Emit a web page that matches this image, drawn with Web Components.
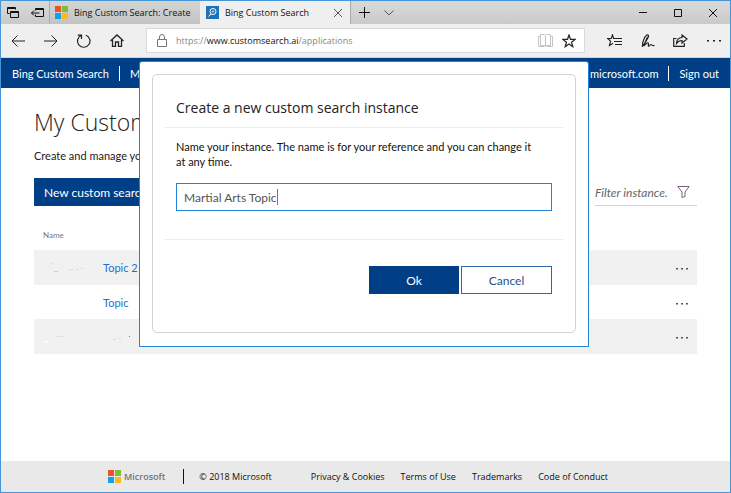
<!DOCTYPE html>
<html lang="en">
<head>
<meta charset="utf-8">
<title>Bing Custom Search</title>
<style>
html, body { margin: 0; height: 100%; }
body { font: 11px/15px Lato, "Open Sans", sans-serif; color: #222; background: #fff; }
</style>
</head>
<body>
<browser-window>
  <browser-tabs slot="chrome"></browser-tabs>
  <browser-toolbar slot="chrome"></browser-toolbar>
  <site-nav></site-nav>
  <instance-page></instance-page>
  <site-footer></site-footer>
  <create-dialog slot="overlay"></create-dialog>
</browser-window>
<script>
const base = `
  *, *::before { box-sizing: border-box; }
  button { font: inherit; color: inherit; background: none; border: 0; padding: 0; margin: 0; }
  input { font: inherit; margin: 0; outline: 0; border-radius: 0; min-width: 0; }
  a { text-decoration: none; color: inherit; }
  svg { display: block; fill: none; stroke: currentColor; }
`;
const logo = `<svg width="13" height="13" viewBox="0 0 13 13" stroke="none" style="stroke:none" aria-hidden="true">
  <path fill="#e8532b" d="M0 0h6v6H0z"/><path fill="#80bb35" d="M7 0h6v6H7z"/>
  <path fill="#13a1e8" d="M0 7h6v6H0z"/><path fill="#fdb71f" d="M7 7h6v6H7z"/></svg>`;
const more = `<button aria-label="Actions"><svg width="12" height="3" viewBox="0 0 12 3"><path fill="#555" stroke="none" d="M0 1h2v1.500H0zM5 1h2v1.500H5zM10 1h2v1.500h-2z"/></svg></button>`;

function define(name, css, html) {
  customElements.define(name, class extends HTMLElement {
    constructor() {
      super();
      this.attachShadow({ mode: 'open' }).innerHTML = `<style>${base}${css}</style>${html}`;
    }
  });
}

define('browser-window', `
  :host { display: flex; flex-direction: column; position: relative; box-sizing: border-box;
    min-height: 100vh; border: 1px solid #4795d6; background: #fff; }
  main { flex: 1; display: flex; flex-direction: column; }
`, `<slot name="chrome"></slot><main><slot></slot></main><slot name="overlay"></slot>`);

define('browser-tabs', `
  :host { display: flex; height: 23px; background: linear-gradient(#d9dad8, #c8caca);
    font: 9px/22px "Open Sans", sans-serif; color: #111; }
  button { display: grid; place-items: center; width: 24px; flex: none; }
  .tab { display: flex; align-items: center; gap: 6px; width: 150px; padding: 0 5px; white-space: nowrap;
    border-left: 1px solid #aaa; background: linear-gradient(#d4d5d3, #c2c4c4); }
  .tab span { flex: 1; }
  .first { width: 151px; }
  .active { background: #efefef; border-left: 0; padding: 0 0 0 6px; }
  .add { width: 27px; border-left: 1px solid #aaa; }
  .win { width: 35px; }
  .gap { flex: 1; }
`, `
  <button aria-label="Tabs set aside"><svg width="12" height="12" viewBox="0 0 12 12"><path d="M2.500 6.500h-2v-6h8v2M0 1.500h9M3.500 4.500h8v6h-8zM3 5.500h9"/></svg></button>
  <button aria-label="Set these tabs aside"><svg width="13" height="12" viewBox="0 0 13 12"><path d="M4.500 3.500v-2h8v8h-8v-2M4 2.500h9M.5 6h8M3 3.500L.5 6 3 8.500"/></svg></button>
  <div class="tab first">${logo}<span>Bing Custom Search: Create</span></div>
  <div class="tab active"><svg width="13" height="13" viewBox="0 0 13 13"><path fill="#1d72b8" stroke="none" d="M0 0h13v13H0z"/><g stroke="#fff"><circle cx="7" cy="5.500" r="3"/><circle cx="7" cy="5.500" r=".6"/><path d="M5 8l-2.500 2.500"/></g></svg><span>Bing Custom Search</span>
    <button aria-label="Close tab"><svg width="8" height="8" viewBox="0 0 8 8"><path stroke="#555" d="M0 0l8 8M8 0L0 8"/></svg></button></div>
  <button class="add" aria-label="New tab"><svg width="11" height="11" viewBox="0 0 11 11"><path d="M5.500 0v11M0 5.500h11"/></svg></button>
  <button aria-label="Tab previews"><svg width="10" height="6" viewBox="0 0 10 6"><path stroke="#555" d="M.5.5L5 5 9.500.5"/></svg></button>
  <div class="gap"></div>
  <button class="win" aria-label="Minimize"><svg width="8" height="8" viewBox="0 0 8 8"><path d="M0 3.500h8"/></svg></button>
  <button class="win" aria-label="Maximize"><svg width="8" height="8" viewBox="0 0 8 8"><path d="M.5.5h7v7h-7z"/></svg></button>
  <button class="win" aria-label="Close"><svg width="8" height="8" viewBox="0 0 8 8"><path d="M0 0l8 8M8 0L0 8"/></svg></button>`);

define('browser-toolbar', `
  :host { display: flex; align-items: center; height: 34px; box-sizing: border-box; background: #efefef;
    border-bottom: 1px solid #d4d4d4; color: #222; }
  button { display: grid; place-items: center; width: 33px; height: 25px; flex: none; }
  .address { flex: 1; display: flex; align-items: center; height: 25px; margin: 0 13px; padding-left: 10px;
    background: #fff; border: 1px solid #dadada; }
  .address svg { flex: none; }
  .address button { width: 24px; }
  .address button:last-child { margin-right: 3px; }
  .url { flex: 1; margin-left: 9px; font: 9px/22px "Open Sans", sans-serif; color: #888; }
  .url b { font-weight: 400; color: #111; }
`, `
  <button aria-label="Back"><svg width="14" height="12" viewBox="0 0 14 12"><path d="M14 6H1M6.500.5L1 6l5.500 5.500"/></svg></button>
  <button aria-label="Forward"><svg width="14" height="12" viewBox="0 0 14 12"><path d="M0 6h13M7.500.5L13 6l-5.500 5.500"/></svg></button>
  <button aria-label="Refresh"><svg width="14" height="14" viewBox="0 0 14 14"><path stroke-width="1.200" d="M8.800 1.200A6.200 6.200 0 1 1 4 1.500M.8 1.200h3.700v3.700"/></svg></button>
  <button aria-label="Home"><svg width="14" height="13" viewBox="0 0 14 13"><path stroke-width="1.300" d="M.5 7L7 1l6.500 6M2.500 6v6.300h3V8h3v4.300h3V6"/></svg></button>
  <div class="address">
    <svg width="10" height="13" viewBox="0 0 10 13"><path stroke="#777" d="M.5 5.500h9v7h-9zM2.500 5.500V3a2.500 2.500 0 0 1 5 0v2.500"/></svg>
    <a class="url" href="#">https://<b>www.customsearch.ai</b>/applications</a>
    <button aria-label="Reading view"><svg width="15" height="13" viewBox="0 0 15 13"><path stroke="#c4c4c4" d="M2.500.5h4l1 1 1-1h4v11h-4l-1 1-1-1h-4zM7.500 1v11M2.500 2.500h-2v10h6M12.500 2.500h2v10h-6"/></svg></button>
    <button aria-label="Add to favorites"><svg width="14" height="14" viewBox="0 0 14 14"><path stroke-width="1.200" d="M7 1l1.500 4.300 4.700.1-3.700 2.800 1.300 4.500L7 10.100l-3.800 2.600 1.300-4.500L.8 5.400l4.700-.1z"/></svg></button>
  </div>
  <button aria-label="Hub"><svg width="15" height="13" viewBox="0 0 15 13"><path stroke-width="1.100" d="M8.800 4.500L6.500 4.500 5.500.8 4.300 4.500.6 4.600l3 2.500-1.200 4.500L6 9.200M8 4.500h7M7 7.500h8M8 10.500h7"/></svg></button>
  <button aria-label="Add notes"><svg width="14" height="14" viewBox="0 0 14 14"><path stroke-width="1.200" d="M1.500 12.800C1 10 3 3 5.500 1.300 7 .3 8 1.500 7.200 3.300 6 6 4 9 1.500 12.500M3.800 9L6.500 3M3 12c2-2.500 3.500-3.800 4.200-3 .8.900-.5 2.900.3 3.200.9.300 1.500-1.700 2.500-1.700.8 0 1 1.500 3.500 1"/></svg></button>
  <button aria-label="Share"><svg width="15" height="13" viewBox="0 0 15 13"><path stroke-width="1.200" d="M3.500 4.500H.7v7.800h10.600V9M9 1l5 4-5 4V6.500C6.500 6.500 5 7.200 3.500 9.500 3.700 5.500 6 3.600 9 3.500z"/></svg></button>
  <button aria-label="Settings and more"><svg width="14" height="2" viewBox="0 0 14 2"><path fill="#222" stroke="none" d="M0 0h2v1.500H0zM6 0h2v1.500H6zM12 0h2v1.500h-2z"/></svg></button>`);

define('site-nav', `
  :host { display: block; background: #003f85; color: #fff; }
  nav { display: flex; align-items: center; height: 30px; padding: 0 11px; }
  a { white-space: nowrap; }
  i { width: 1px; height: 15px; background: #fff; margin: 0 10px; }
  .gap { flex: 1; }
`, `<nav><a href="#">Bing Custom Search</a><i></i><a href="#">My</a><span class="gap"></span>
  <a href="#">microsoft.com</a><i></i><a href="#">Sign out</a></nav>`);

define('instance-page', `
  :host { display: block; flex: 1; padding: 17px 33px; }
  h1 { font: 300 23px/34px "Open Sans", sans-serif; color: #222; margin: 0; }
  p { margin: 9px 0 15px; }
  .bar { display: flex; justify-content: space-between; align-items: flex-end; height: 28px; }
  .new { background: #003f85; color: #fff; height: 28px; width: 160px; padding: 0 10px; font-size: 12px; text-align: left; }
  label { display: flex; align-items: center; gap: 6px; height: 27px; padding-right: 7px; border-bottom: 1px solid #d4d4d4; }
  label input { width: 76px; border: 0; padding: 0; font-style: italic; font-size: 12px; color: #666; background: none; }
  label svg { color: #77607a; }
  table { width: 100%; border-collapse: collapse; margin-top: 17px; }
  th { text-align: left; font-weight: 400; font-size: 8px; line-height: 25px; color: #777; padding: 0 0 2px 9px; }
  td { height: 34px; padding: 0 9px; }
  tbody tr:nth-child(odd) { background: #f1f1f1; }
  tbody tr:nth-child(odd) td { height: 35px; }
  .name { display: flex; align-items: center; }
  .name a { color: #1a6fd0; }
  td:last-child { width: 40px; }
  td button { display: block; margin-left: auto; padding: 8px 0 6px; }
`, `
  <h1>My Custom</h1>
  <p>Create and manage your</p>
  <div class="bar">
    <button class="new">New custom search</button>
    <label><input aria-label="Filter instance" value="Filter instance."><svg width="13" height="12" viewBox="0 0 13 12"><path d="M.8.5h11.400L8 6v4.500L5 11.500V6z"/></svg></label>
  </div>
  <table>
    <thead><tr><th>Name</th><th></th></tr></thead>
    <tbody>
      <tr><td><div class="name"><svg width="60" height="16" viewBox="0 0 60 16"><path stroke="#ccc" d="M8 3.500h1M11 11.500h4"/><path stroke="#dedede" d="M26 9.500h4M33 9.500h3M38 8.500h3"/></svg><a href="#">Topic 2</a></div></td><td>${more}</td></tr>
      <tr><td><div class="name"><svg width="60" height="16"></svg><a href="#">Topic</a></div></td><td>${more}</td></tr>
      <tr><td><div class="name"><svg width="90" height="16" viewBox="0 0 90 16"><path stroke="#fff" d="M1 12.500h5"/><path stroke="#d3e2f0" d="M14 7.500h8M52 10.500h2"/><path stroke="#dadada" d="M70 10.500h3M76 9.500h2"/><path stroke="#4a8fd6" d="M86 7.500h1"/></svg></div></td><td>${more}</td></tr>
    </tbody>
  </table>`);

define('create-dialog', `
  :host { display: block; position: absolute; top: 60px; left: 138px; right: 141px; background: #fff;
    border: 1px solid #2482d3; border-radius: 3px 3px 0 0; box-sizing: border-box; padding: 12px 12px 13px; color: #111; }
  form { border: 1px solid #d2d2d2; border-radius: 5px; padding: 0 11px 38px 12px; }
  h2 { font: 14px/20px "Open Sans", sans-serif; color: #222; margin: 0; padding: 23px 11px 9px; border-bottom: 1px solid #ececec; }
  .body { padding: 11px 12px 28px 11px; border-bottom: 1px solid #ececec; }
  label { display: block; margin-bottom: 14px; padding-right: 12px; }
  .field { position: relative; font-size: 12px; }
  .field input { display: block; width: 100%; height: 28px; padding: 1px 7px 0; border: 1px solid #2482d3; color: #555; background: #fff; }
  .caret { position: absolute; left: 101px; top: 6px; width: 1px; height: 16px; background: #777; }
  .actions { display: flex; justify-content: flex-end; gap: 2px; padding: 26px 12px 0; font-size: 12px; }
  .actions button { width: 91px; height: 28px; border: 1px solid #2f66a5; color: #1d4f90; }
  .actions .ok { background: #003f85; border-color: #003f85; color: #fff; width: 90px; }
`, `
  <form role="dialog" aria-labelledby="t">
    <h2 id="t">Create a new custom search instance</h2>
    <div class="body">
      <label for="n">Name your instance. The name is for your reference and you can change it at any time.</label>
      <div class="field"><input id="n" value="Martial Arts Topic"><span class="caret"></span></div>
    </div>
    <div class="actions"><button type="button" class="ok">Ok</button><button type="button">Cancel</button></div>
  </form>`);

define('site-footer', `
  :host { display: block; background: #e9e9e9; color: #111; }
  footer { display: flex; align-items: center; height: 31px; padding-left: 107px;
    font: 9px/15px "Open Sans", sans-serif; white-space: nowrap; }
  .brand { display: flex; align-items: center; gap: 3px; color: #737373; font-weight: 600; }
  i { width: 1px; height: 15px; background: #111; margin: 0 15px 0 18px; }
  nav { display: flex; gap: 16px; margin-left: 39px; }
`, `<footer><span class="brand">${logo}Microsoft</span><i></i><span>© 2018 Microsoft</span>
  <nav><a href="#">Privacy &amp; Cookies</a><a href="#">Terms of Use</a><a href="#">Trademarks</a><a href="#">Code of Conduct</a></nav></footer>`);
</script>
</body>
</html>
